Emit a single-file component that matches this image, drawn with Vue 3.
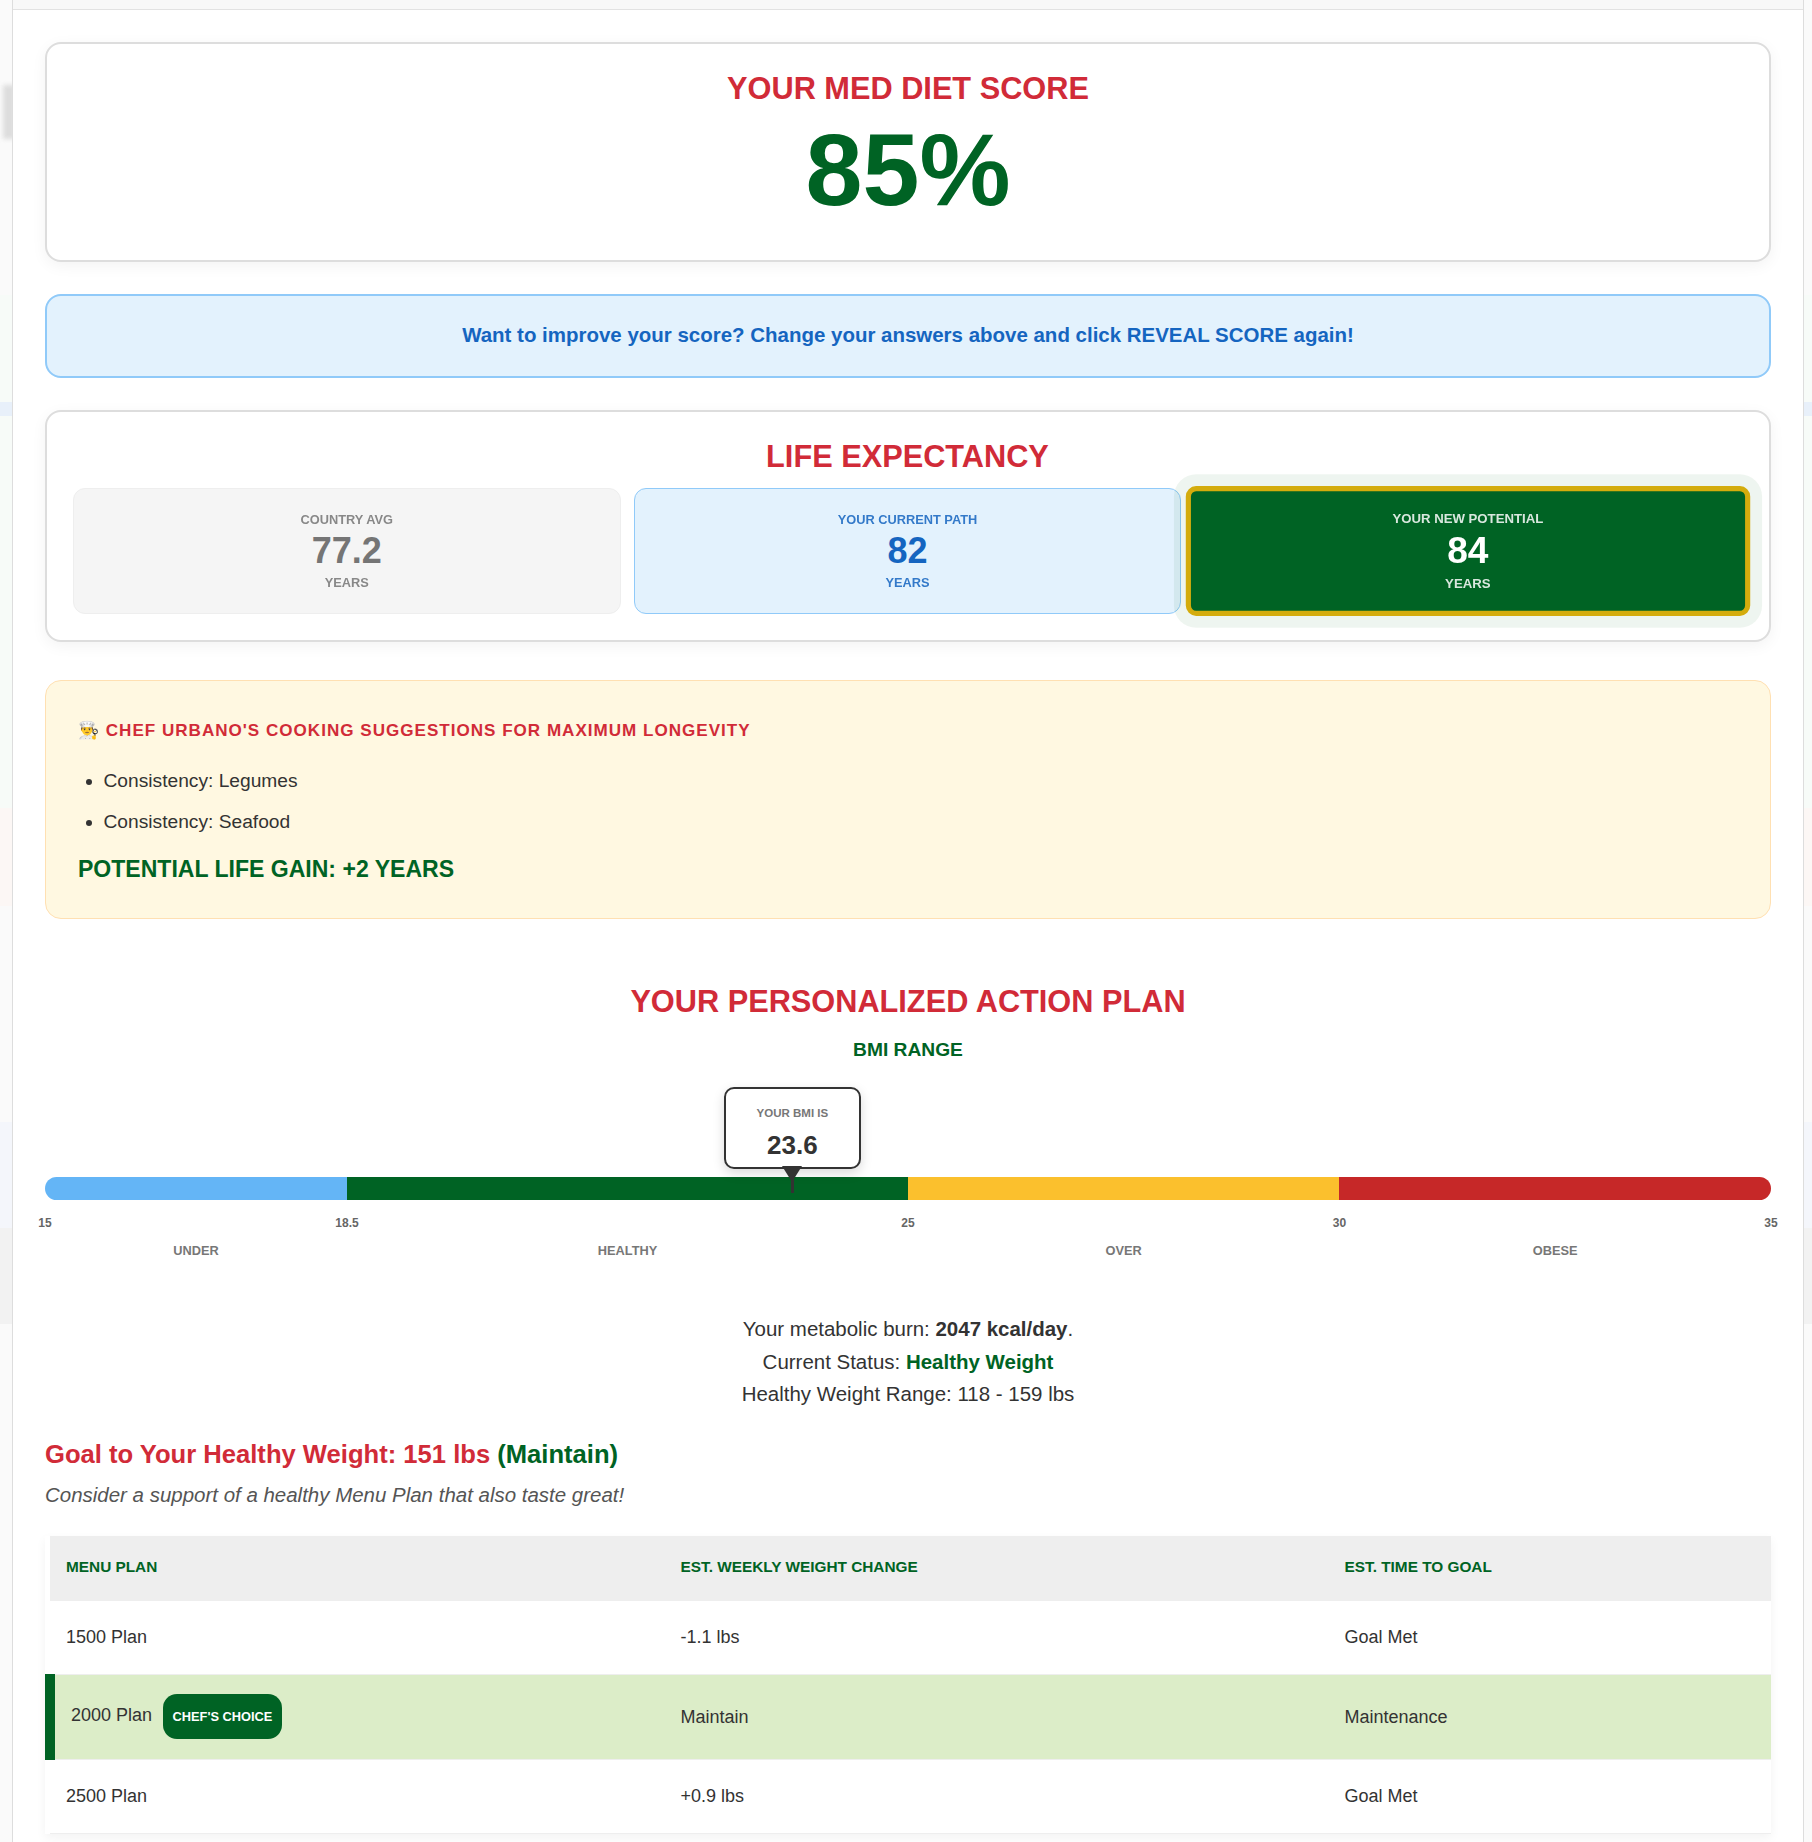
<script setup>
const tiles = [
  { key: 'avg', label: 'COUNTRY AVG', value: '77.2' },
  { key: 'current', label: 'YOUR CURRENT PATH', value: '82' },
  { key: 'potential', label: 'YOUR NEW POTENTIAL', value: '84' },
]

const zones = [
  { name: 'UNDER', width: 17.5, color: '#64b5f6' },
  { name: 'HEALTHY', width: 32.5, color: '#006324' },
  { name: 'OVER', width: 25, color: '#fbc02d' },
  { name: 'OBESE', width: 25, color: '#c62828' },
]

const ticks = [
  { label: '15', at: 0 },
  { label: '18.5', at: 17.5 },
  { label: '25', at: 50 },
  { label: '30', at: 75 },
  { label: '35', at: 100 },
]

const plans = [
  { name: '1500 Plan', change: '-1.1 lbs', time: 'Goal Met' },
  { name: '2000 Plan', change: 'Maintain', time: 'Maintenance', chosen: true },
  { name: '2500 Plan', change: '+0.9 lbs', time: 'Goal Met' },
]

// faded page behind the sheet, only visible in the side gutters
const bands = [
  { height: 295, color: '#fafafa' },
  { height: 107, color: '#f7fbf8' },
  { height: 14, color: '#e8f0fa' },
  { height: 392, color: '#f7fbf8' },
  { height: 98, color: '#fcf7f5' },
  { height: 216, color: '#fafafa' },
  { height: 106, color: '#f4f6fb' },
  { height: 96, color: '#f2f2f2' },
  { height: 518, color: '#fafafa' },
]
</script>

<template>
  <div class="page">
    <div class="backdrop">
      <div
        v-for="(band, index) in bands"
        :key="index"
        :style="{ height: band.height + 'px', background: band.color }"
      />
      <div class="backdrop-blob" />
    </div>
    <div class="sheet">
      <div class="top-strip" />
      <div class="content">
        <section class="card score-card">
          <h2 class="card-title">YOUR MED DIET SCORE</h2>
          <div class="score">85%</div>
        </section>

        <section class="improve">
          Want to improve your score? Change your answers above and click REVEAL SCORE again!
        </section>

        <section class="card life-card">
          <h2 class="card-title">LIFE EXPECTANCY</h2>
          <div class="tiles">
            <div
              v-for="tile in tiles"
              :key="tile.key"
              class="tile"
              :class="tile.key"
            >
              <div class="tile-label">{{ tile.label }}</div>
              <div class="tile-value">{{ tile.value }}</div>
              <div class="tile-unit">YEARS</div>
            </div>
          </div>
        </section>

        <section class="chef">
          <h3 class="chef-title">👨‍🍳 CHEF URBANO'S COOKING SUGGESTIONS FOR MAXIMUM LONGEVITY</h3>
          <ul class="chef-list">
            <li>Consistency: Legumes</li>
            <li>Consistency: Seafood</li>
          </ul>
          <div class="gain">POTENTIAL LIFE GAIN: +2 YEARS</div>
        </section>

        <h2 class="plan-title">YOUR PERSONALIZED ACTION PLAN</h2>
        <h3 class="bmi-title">BMI RANGE</h3>

        <div class="gauge">
          <div class="bar">
            <div
              v-for="zone in zones"
              :key="zone.name"
              class="bar-seg"
              :style="{ width: zone.width + '%', background: zone.color }"
            />
          </div>
          <div class="marker" :style="{ left: '43.3%' }">
            <div class="bubble">
              <div class="bubble-label">YOUR BMI IS</div>
              <div class="bubble-value">23.6</div>
            </div>
            <div class="pointer" />
            <div class="stem" />
          </div>
          <div class="ticks">
            <span
              v-for="tick in ticks"
              :key="tick.label"
              class="tick"
              :style="{ left: tick.at + '%' }"
            >{{ tick.label }}</span>
          </div>
          <div class="zone-names">
            <span
              v-for="zone in zones"
              :key="zone.name"
              :style="{ width: zone.width + '%' }"
            >{{ zone.name }}</span>
          </div>
        </div>

        <div class="metabolic">
          <p>Your metabolic burn: <strong>2047 kcal/day</strong>.</p>
          <p>Current Status: <strong class="green">Healthy Weight</strong></p>
          <p>Healthy Weight Range: 118 - 159 lbs</p>
        </div>

        <h3 class="goal">Goal to Your Healthy Weight: 151 lbs <span class="green">(Maintain)</span></h3>
        <p class="consider">Consider a support of a healthy Menu Plan that also taste great!</p>

        <table class="plans">
          <colgroup>
            <col class="col-plan">
            <col class="col-change">
            <col>
          </colgroup>
          <thead>
            <tr>
              <th>MENU PLAN</th>
              <th>EST. WEEKLY WEIGHT CHANGE</th>
              <th>EST. TIME TO GOAL</th>
            </tr>
          </thead>
          <tbody>
            <tr
              v-for="plan in plans"
              :key="plan.name"
              :class="{ chosen: plan.chosen }"
            >
              <td>
                {{ plan.name }}
                <span v-if="plan.chosen" class="badge">CHEF'S CHOICE</span>
              </td>
              <td>{{ plan.change }}</td>
              <td>{{ plan.time }}</td>
            </tr>
          </tbody>
        </table>
      </div>
    </div>
  </div>
</template>

<style>
html,
body {
  margin: 0;
  background: #fafafa;
}
</style>

<style scoped>
.page {
  position: relative;
  height: 1842px;
  overflow: hidden;
  padding-left: 12px;
  padding-right: 8px;
  box-sizing: border-box;
  font-family: "Liberation Sans", Arial, sans-serif;
  color: #333;
}

.backdrop {
  position: absolute;
  inset: 0;
}

.backdrop-blob {
  position: absolute;
  left: 3px;
  top: 85px;
  width: 12px;
  height: 54px;
  background: #ddd;
  filter: blur(2px);
}

.sheet {
  position: relative;
  background: #fff;
  border-left: 1px solid #ddd;
  border-right: 1px solid #ddd;
  height: 100%;
}

.top-strip {
  height: 9px;
  background: #f8f8f8;
  border-bottom: 1px solid #e2e2e2;
}

.content {
  padding: 32px 32px 0;
}

.card {
  border: 2px solid #ddd;
  border-radius: 16px;
  background: #fff;
  box-shadow: 0 4px 15px rgba(0, 0, 0, 0.05);
  text-align: center;
}

.card-title {
  margin: 0;
  font-size: 30.72px;
  line-height: 37px;
  font-weight: 700;
  color: #d12b38;
}

.score-card {
  height: 220px;
  box-sizing: border-box;
  padding-top: 26px;
}

.score {
  margin-top: 5px;
  font-size: 102.4px;
  line-height: 115px;
  font-weight: 700;
  color: #006324;
}

.improve {
  margin-top: 32px;
  height: 84px;
  box-sizing: border-box;
  border: 2px solid #90caf9;
  border-radius: 16px;
  background: #e3f2fd;
  color: #1565c0;
  font-size: 20.48px;
  font-weight: 700;
  line-height: 78px;
  text-align: center;
}

.life-card {
  margin-top: 32px;
  height: 232px;
  box-sizing: border-box;
  padding: 26px 27px 0 26px;
}

.tiles {
  display: grid;
  grid-template-columns: repeat(3, 1fr);
  gap: 13px;
  margin-top: 13px;
}

.tile {
  height: 126px;
  box-sizing: border-box;
  padding-top: 23px;
  border: 1px solid #eee;
  border-radius: 12px;
  background: #f5f5f5;
  color: #757575;
}

.tile-label {
  font-size: 12.8px;
  line-height: 15px;
  font-weight: 700;
  opacity: 0.85;
}

.tile-value {
  margin-top: 3px;
  font-size: 36px;
  line-height: 41px;
  font-weight: 700;
}

.tile-unit {
  margin-top: 4px;
  font-size: 12.8px;
  line-height: 15px;
  font-weight: 700;
  opacity: 0.85;
}

.tile.current {
  background: #e3f2fd;
  border-color: #90caf9;
  color: #1565c0;
}

.tile.potential {
  background: #006324;
  border: 5px solid #d4ac0d;
  border-radius: 10px;
  padding-top: 19px;
  color: #fff;
  transform: scale(1.03);
  box-shadow: 0 0 0 11.5px rgba(0, 99, 36, 0.067);
}

.chef {
  margin-top: 38px;
  height: 239px;
  box-sizing: border-box;
  padding: 40px 32px 0;
  border: 1px solid #ffe0b2;
  border-radius: 16px;
  background: #fff8e1;
}

.chef-title {
  margin: 0;
  font-size: 17.07px;
  line-height: 20px;
  font-weight: 700;
  letter-spacing: 1px;
  color: #d12b38;
}

.chef-list {
  margin: 25px 0 0;
  padding: 0 0 0 25.5px;
  font-size: 19.2px;
  line-height: 30px;
}

.chef-list li + li {
  margin-top: 11px;
}

.gain {
  margin-top: 18px;
  font-size: 23.04px;
  line-height: 28px;
  font-weight: 700;
  color: #006324;
}

.plan-title {
  margin: 64px 0 0;
  font-size: 30.72px;
  line-height: 37px;
  font-weight: 700;
  text-align: center;
  color: #d12b38;
}

.bmi-title {
  margin: 18px 0 0;
  font-size: 19.2px;
  line-height: 23px;
  font-weight: 700;
  text-align: center;
  color: #006324;
}

.gauge {
  position: relative;
  margin-top: 116px;
  height: 90px;
}

.bar {
  display: flex;
  height: 23px;
  border-radius: 12px;
  overflow: hidden;
}

.marker {
  position: absolute;
  left: 0;
  bottom: 74px;
  width: 0;
  display: flex;
  flex-direction: column;
  align-items: center;
}

.bubble {
  flex: none;
  width: 137px;
  height: 82px;
  box-sizing: border-box;
  padding-top: 17px;
  border: 2px solid #333;
  border-radius: 10px;
  background: #fff;
  box-shadow: 0 4px 12px rgba(0, 0, 0, 0.15);
  text-align: center;
}

.bubble-label {
  font-size: 11.52px;
  line-height: 14px;
  font-weight: 700;
  color: #777;
}

.bubble-value {
  margin-top: 10px;
  font-size: 26px;
  line-height: 30px;
  font-weight: 700;
  color: #333;
}

.pointer {
  flex: none;
  margin-top: -3px;
  width: 0;
  height: 0;
  border-left: 10px solid transparent;
  border-right: 10px solid transparent;
  border-top: 16px solid #333;
}

.stem {
  flex: none;
  margin-top: -4px;
  width: 3px;
  height: 15px;
  background: #333;
}

.ticks {
  position: relative;
  margin-top: 15px;
  height: 16px;
}

.tick {
  position: absolute;
  top: 0;
  transform: translateX(-50%);
  font-size: 12px;
  line-height: 16px;
  font-weight: 700;
  color: #666;
}

.zone-names {
  display: flex;
  margin-top: 12px;
}

.zone-names span {
  font-size: 12.8px;
  line-height: 16px;
  font-weight: 700;
  text-align: center;
  color: #777;
}

.metabolic {
  margin-top: 46px;
  text-align: center;
  font-size: 20.48px;
  line-height: 32.5px;
}

.metabolic p {
  margin: 0;
}

.green {
  color: #006324;
}

.goal {
  margin: 28px 0 0;
  font-size: 25.6px;
  line-height: 30px;
  font-weight: 700;
  color: #d12b38;
}

.consider {
  margin: 13px 0 0;
  font-size: 20.48px;
  line-height: 26px;
  font-style: italic;
  color: #555;
}

.plans {
  margin-top: 28px;
  width: 100%;
  table-layout: fixed;
  border-collapse: collapse;
  background: #fff;
  box-shadow: 0 4px 10px rgba(0, 0, 0, 0.05);
}

.col-plan {
  width: 614.5px;
}

.col-change {
  width: 664px;
}

.plans th {
  height: 65px;
  padding: 0 16px 2px;
  box-sizing: border-box;
  background: #eee;
  color: #006324;
  font-size: 15.36px;
  font-weight: 700;
  text-align: left;
}

.plans td {
  height: 73px;
  padding: 0 16px;
  border-bottom: 1px solid #eee;
  font-size: 18px;
}

.plans tr.chosen td {
  height: 82.5px;
  padding-top: 2px;
  background: #dcedc8;
}

.plans tr.chosen td:first-child {
  height: 84.5px;
  padding-top: 0;
  border-left: 10px solid #006324;
}

.badge {
  display: inline-block;
  margin-left: 5.5px;
  padding: 0 10px;
  height: 45px;
  border-radius: 14px;
  background: #006324;
  color: #fff;
  font-size: 12.8px;
  line-height: 45px;
  font-weight: 700;
  vertical-align: middle;
}
</style>
